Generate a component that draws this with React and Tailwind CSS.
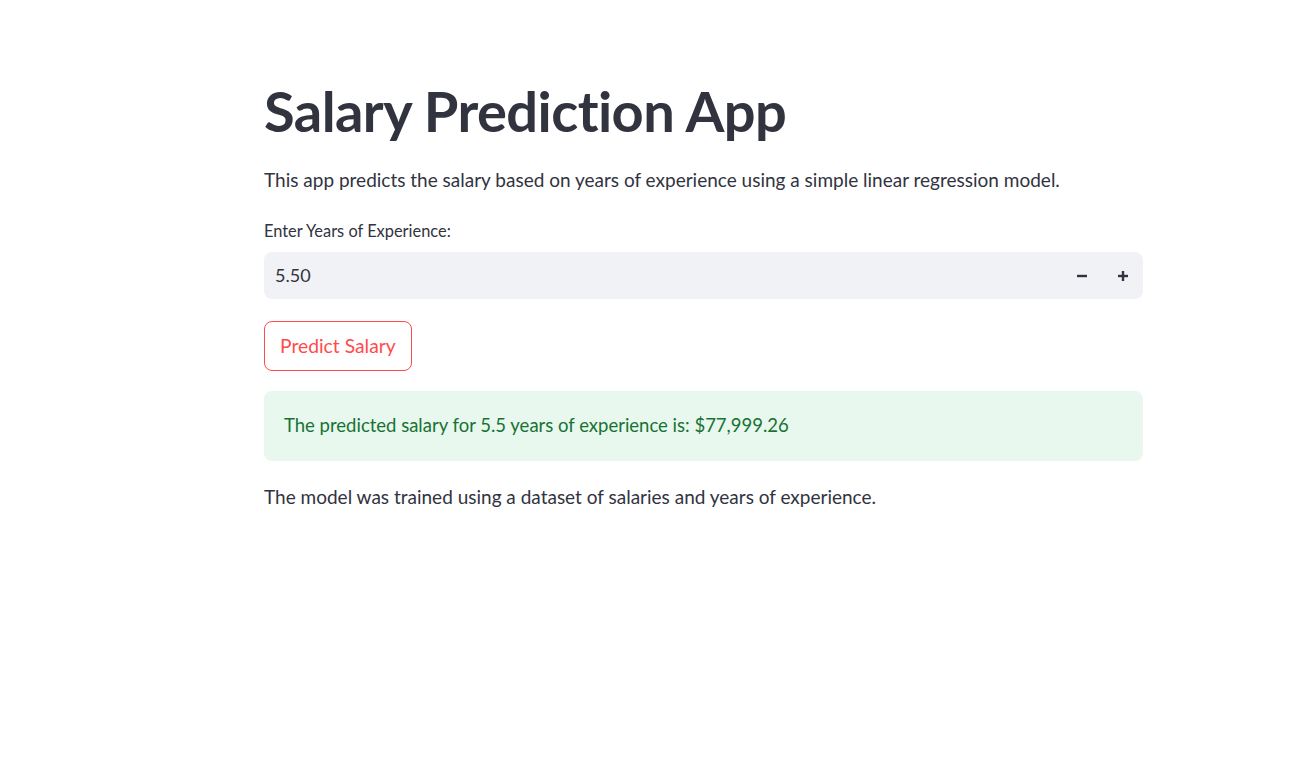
export default function App() {
  return (
    <div className="min-h-[757px] w-full bg-white" style={{ fontFamily: "Lato, 'Noto Sans', sans-serif" }}>
      <div className="ml-[264px] w-[879px] pt-[77px] flex flex-col text-[#31333F]">
        <h1 className="text-[56px] font-bold leading-[68px] tracking-[-0.01em] text-[#31333F]">Salary Prediction App</h1>
        <p className="mt-[21px] text-[19px] leading-[28px]">This app predicts the salary based on years of experience using a simple linear regression model.</p>
        <label className="mt-[27px] text-[16.4px] leading-[20px]">Enter Years of Experience:</label>
        <div className="mt-[11px] h-[47px] rounded-[8px] bg-[#F0F2F6] flex items-center pl-[11px]">
          <span className="flex-1 text-[18px]">5.50</span>
          <button className="w-[41px] h-[47px] flex items-center justify-center">
            <svg width="12" height="12" viewBox="0 0 12 12"><line x1="1" y1="6" x2="11" y2="6" stroke="#31333F" strokeWidth="2.4" /></svg>
          </button>
          <button className="w-[41px] h-[47px] flex items-center justify-center">
            <svg width="12" height="12" viewBox="0 0 12 12"><line x1="1" y1="6" x2="11" y2="6" stroke="#31333F" strokeWidth="2.4" /><line x1="6" y1="1" x2="6" y2="11" stroke="#31333F" strokeWidth="2.4" /></svg>
          </button>
        </div>
        <div className="mt-[22px]">
          <button className="h-[50px] px-[15px] rounded-[8px] border border-[#FF4B4B] text-[#FF4B4B] text-[19.3px] bg-white">Predict Salary</button>
        </div>
        <div className="mt-[20px] h-[70px] rounded-[8px] bg-[#E8F8EE] flex items-center px-[20px] text-[#177233] text-[18.5px]">
          The predicted salary for 5.5 years of experience is: $77,999.26
        </div>
        <p className="mt-[22px] text-[19px] leading-[28px]">The model was trained using a dataset of salaries and years of experience.</p>
      </div>
    </div>
  );
}
